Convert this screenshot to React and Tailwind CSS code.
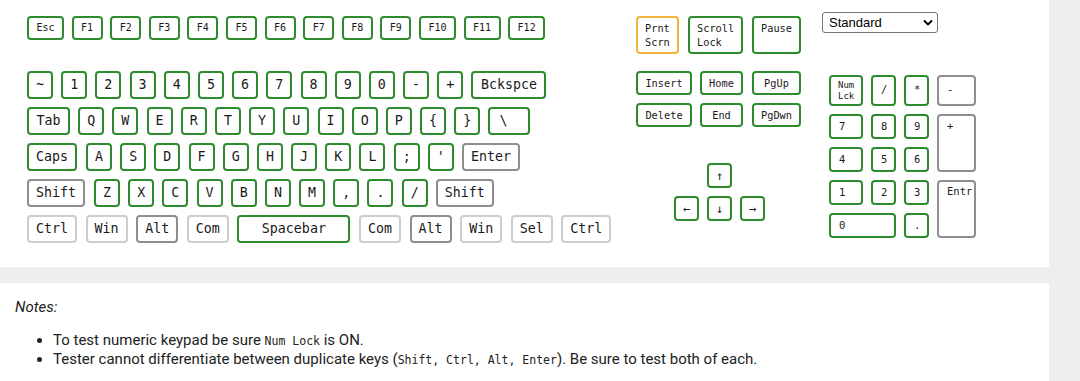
import React from "react";

const G = "border-[#2e8b2e]";
const GR = "border-[#8e8e8e]";
const LG = "border-[#cdcdcd]";
const OR = "border-[#f2b33d]";

function Key({ label, w, b = G, h = "h-[28px]", t = "text-[13.3px]", extra = "justify-center" }) {
  return (
    <div
      className={`${w} ${h} ${b} ${t} ${extra} flex items-center shrink-0 rounded-[4px] border-2 bg-white text-[#1a1a1a] leading-none whitespace-pre`}
    >
      {label}
    </div>
  );
}

const fRow = [
  ["Esc", "w-[37px]"],
  ["F1", "w-[31px]"],
  ["F2", "w-[31px]"],
  ["F3", "w-[31px]"],
  ["F4", "w-[31px]"],
  ["F5", "w-[31px]"],
  ["F6", "w-[31px]"],
  ["F7", "w-[31px]"],
  ["F8", "w-[31px]"],
  ["F9", "w-[31px]"],
  ["F10", "w-[37px]"],
  ["F11", "w-[37px]"],
  ["F12", "w-[37px]"],
];

const numRow = ["~", "1", "2", "3", "4", "5", "6", "7", "8", "9", "0", "-", "+"];
const qRow = ["Q", "W", "E", "R", "T", "Y", "U", "I", "O", "P", "{", "}"];
const aRow = ["A", "S", "D", "F", "G", "H", "J", "K", "L", ";", "'"];
const zRow = ["Z", "X", "C", "V", "B", "N", "M", ",", ".", "/"];

const bottomRow = [
  ["Ctrl", "w-[50px]", LG],
  ["Win", "w-[42px]", LG],
  ["Alt", "w-[42px]", GR],
  ["Com", "w-[42px]", LG],
  ["Spacebar", "w-[113px]", G],
  ["Com", "w-[42px]", LG],
  ["Alt", "w-[42px]", GR],
  ["Win", "w-[42px]", LG],
  ["Sel", "w-[42px]", LG],
  ["Ctrl", "w-[50px]", LG],
];

function NavTall({ lines, w, b = G }) {
  return (
    <div
      className={`${w} ${b} h-[38px] shrink-0 rounded-[4px] border-2 bg-white pl-[7px] pt-[3px] text-[10.3px] leading-[14px] text-[#1a1a1a]`}
    >
      {lines.map((l) => (
        <div key={l}>{l}</div>
      ))}
    </div>
  );
}

function NavKey({ label, w, extra = "" }) {
  return (
    <div
      className={`${w} ${extra} ${G} h-[24px] shrink-0 flex items-center justify-center rounded-[4px] border-2 bg-white text-[10.3px] leading-none text-[#1a1a1a]`}
    >
      {label}
    </div>
  );
}

function Arrow({ label }) {
  return (
    <div
      className={`${G} w-[25px] h-[25px] flex items-center justify-center rounded-[4px] border-2 bg-white text-[12px] leading-none text-[#1a1a1a]`}
    >
      {label}
    </div>
  );
}

function NP({ label, b = G, extra = "" }) {
  return (
    <div
      className={`${b} ${extra} rounded-[4px] border-2 bg-white pl-[8px] text-[10.5px] leading-[12px] text-[#1a1a1a]`}
    >
      {label}
    </div>
  );
}

const codeCls = "font-['DejaVu_Sans_Mono',monospace] text-[11.5px]";

export default function App() {
  return (
    <div className="min-h-screen bg-[#eeeeee] font-['Roboto',Arial,sans-serif] text-[#222]">
      <div className="w-[1049px] h-[267px] bg-white flex pl-[27px] pt-[12px] font-['DejaVu_Sans_Mono',monospace]">
        {/* main keyboard */}
        <div className="w-[585px] shrink-0 pt-[4px] flex flex-col">
          <div className="flex gap-[7.6px]">
            {fRow.map(([l, w]) => (
              <Key key={l} label={l} w={w} h="h-[24px]" t="text-[10px]" />
            ))}
          </div>
          <div className="mt-[31px] flex flex-col gap-[8px]">
            <div className="flex gap-[8.2px]">
              {numRow.map((l) => (
                <Key key={l} label={l} w="w-[26px]" />
              ))}
              <Key label="Bckspce" w="w-[75px]" />
            </div>
            <div className="flex gap-[8.2px]">
              <Key label="Tab" w="w-[43px]" />
              {qRow.map((l) => (
                <Key key={l} label={l} w="w-[26px]" />
              ))}
              <Key label="\" w="w-[42px]" extra="justify-start pl-[9px]" />
            </div>
            <div className="flex gap-[8.2px]">
              <Key label="Caps" w="w-[50px]" extra="justify-center mr-[0.8px]" />
              {aRow.map((l) => (
                <Key key={l} label={l} w="w-[26px]" />
              ))}
              <Key label="Enter" w="w-[58px]" b={GR} />
            </div>
            <div className="flex gap-[8.2px]">
              <Key label="Shift" w="w-[58px]" b={GR} extra="justify-center mr-[0.8px]" />
              {zRow.map((l) => (
                <Key key={l} label={l} w="w-[26px]" />
              ))}
              <Key label="Shift" w="w-[58px]" b={GR} />
            </div>
            <div className="flex gap-[8.6px]">
              {bottomRow.map(([l, w, b], i) => (
                <Key key={i} label={l} w={w} b={b} />
              ))}
            </div>
          </div>
        </div>

        {/* navigation cluster */}
        <div className="ml-[24px] w-[165px] shrink-0 pt-[4px] flex flex-col">
          <div className="flex gap-[9px]">
            <NavTall lines={["Prnt", "Scrn"]} w="w-[43px]" b={OR} />
            <NavTall lines={["Scroll", "Lock"]} w="w-[55px]" />
            <NavTall lines={["Pause"]} w="w-[49px]" />
          </div>
          <div className="mt-[17px] flex">
            <NavKey label="Insert" w="w-[56px]" />
            <NavKey label="Home" w="w-[43px]" extra="ml-[8px]" />
            <NavKey label="PgUp" w="w-[49px]" extra="ml-[9px]" />
          </div>
          <div className="mt-[8px] flex">
            <NavKey label="Delete" w="w-[56px]" />
            <NavKey label="End" w="w-[43px]" extra="ml-[8px]" />
            <NavKey label="PgDwn" w="w-[49px]" extra="ml-[9px]" />
          </div>
          <div className="mt-[36px] pl-[71px] flex">
            <Arrow label="↑" />
          </div>
          <div className="mt-[8px] pl-[38px] flex gap-[8px]">
            <Arrow label="←" />
            <Arrow label="↓" />
            <Arrow label="→" />
          </div>
        </div>

        {/* select + numpad */}
        <div className="ml-[21px] shrink-0 flex flex-col">
          <div className="w-[116px] h-[21px] flex items-center justify-between rounded-[3px] border border-[#767676] bg-white pl-[6px] pr-[4px] font-['Liberation_Sans',Arial,sans-serif] text-[13px] text-black">
            <span>Standard</span>
            <svg width="10" height="7" viewBox="0 0 10 7">
              <path d="M1 1.5 L5 5.5 L9 1.5" fill="none" stroke="#000" strokeWidth="1.8" />
            </svg>
          </div>
          <div className="mt-[42px] ml-[7px] grid grid-cols-[34px_25px_25px_39px] grid-rows-[31px_25px_25px_25px_25px] gap-[8px]">
            <div className={`${G} rounded-[4px] border-2 bg-white pl-[7px] pt-[3px] text-[9px] leading-[11px] text-[#1a1a1a]`}>
              <div>Num</div>
              <div>Lck</div>
            </div>
            <NP label="/" extra="pt-[6px]" />
            <NP label="*" extra="pt-[6px]" />
            <NP label="-" b={GR} extra="pt-[6px]" />
            <NP label="7" extra="pt-[4px]" />
            <NP label="8" extra="pt-[4px]" />
            <NP label="9" extra="pt-[4px]" />
            <NP label="+" b={GR} extra="row-span-2 pt-[4px]" />
            <NP label="4" extra="pt-[4px]" />
            <NP label="5" extra="pt-[4px]" />
            <NP label="6" extra="pt-[4px]" />
            <NP label="1" extra="pt-[4px]" />
            <NP label="2" extra="pt-[4px]" />
            <NP label="3" extra="pt-[4px]" />
            <NP label="Entr" b={GR} extra="row-span-2 pt-[3px]" />
            <NP label="0" extra="col-span-2 pt-[4px]" />
            <NP label="." extra="pt-[4px]" />
          </div>
        </div>
      </div>

      <div className="w-[1049px] mt-[16px] bg-white pt-[15px] pl-[15px] pb-[30px] text-[15px] leading-[18px] text-[#222]">
        <p className="italic">Notes:</p>
        <ul className="mt-[15px] list-disc pl-[38px]">
          <li>
            To test numeric keypad be sure <code className={codeCls}>Num Lock</code> is ON.
          </li>
          <li>
            Tester cannot differentiate between duplicate keys (
            <code className={codeCls}>Shift, Ctrl, Alt, Enter</code>). Be sure to test both of each.
          </li>
        </ul>
      </div>
    </div>
  );
}
